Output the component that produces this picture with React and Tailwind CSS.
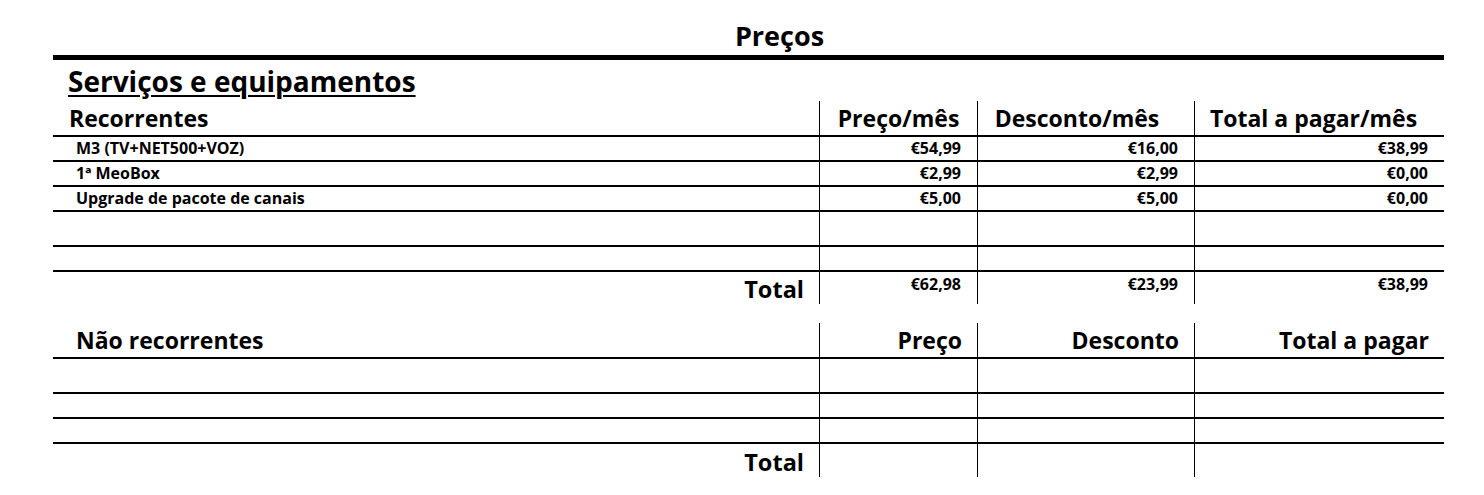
const recurring = [
  { label: 'M3 (TV+NET500+VOZ)', price: '€54,99', discount: '€16,00', total: '€38,99' },
  { label: '1ª MeoBox', price: '€2,99', discount: '€2,99', total: '€0,00' },
  { label: 'Upgrade de pacote de canais', price: '€5,00', discount: '€5,00', total: '€0,00' },
];

const grid = 'grid grid-cols-[766px_158px_217px_250px]';

function Row({ height, label, values = ['', '', ''] }) {
  return (
    <div className={`${grid} ${height} border-b-2 border-black`}>
      <div className="flex items-start pl-[23px] pt-[3px] text-[16px] leading-none">{label}</div>
      {values.map((v, i) => (
        <div key={i} className="flex items-start justify-end border-l border-black pr-[16px] pt-[3px] text-[16px] leading-none">
          {v}
        </div>
      ))}
    </div>
  );
}

function TotalRow({ height, values = ['', '', ''] }) {
  return (
    <div className={`${grid} ${height}`}>
      <div className="flex items-end justify-end pb-[3px] pr-[15px] text-[23.5px] leading-none">Total</div>
      {values.map((v, i) => (
        <div key={i} className="flex items-start justify-end border-l border-black pr-[16px] pt-[4px] text-[16px] leading-none">
          {v}
        </div>
      ))}
    </div>
  );
}

export default function App() {
  return (
    <div className="min-h-screen bg-white font-['Open_Sans',sans-serif] font-bold text-black">
      <div className="w-[1391px] ml-[53px]">
        <div className="flex h-[55px] items-end justify-center pb-[6px] pl-[62px] text-[27px] leading-none">
          Preços
        </div>
        <div className="h-[5px] bg-black" />
        <div className="flex h-[41px] items-end pl-[15px] pb-[6px]">
          <span className="text-[28px] leading-none underline decoration-2 underline-offset-[3px]">
            Serviços e equipamentos
          </span>
        </div>

        <div className={`${grid} h-[36px] border-b-2 border-black text-[23px] leading-none`}>
          <div className="flex items-end pl-[16px] pb-[5px]">Recorrentes</div>
          <div className="flex items-end justify-center border-l border-black pb-[5px]">Preço/mês</div>
          <div className="flex items-end justify-center border-l border-black pb-[5px] pr-[18px]">Desconto/mês</div>
          <div className="flex items-end justify-center border-l border-black pb-[5px] pr-[12px]">Total a pagar/mês</div>
        </div>
        {recurring.map((r) => (
          <Row key={r.label} height="h-[25px]" label={r.label} values={[r.price, r.discount, r.total]} />
        ))}
        <Row height="h-[35px]" />
        <Row height="h-[25px]" />
        <TotalRow height="h-[32px]" values={['€62,98', '€23,99', '€38,99']} />

        <div className="h-[19px]" />

        <div className={`${grid} h-[36px] border-b-2 border-black text-[23px] leading-none`}>
          <div className="flex items-end pl-[23px] pb-[5px]">Não recorrentes</div>
          <div className="flex items-end justify-end border-l border-black pb-[5px] pr-[15px]">Preço</div>
          <div className="flex items-end justify-end border-l border-black pb-[5px] pr-[15px]">Desconto</div>
          <div className="flex items-end justify-end border-l border-black pb-[5px] pr-[15px]">Total a pagar</div>
        </div>
        <Row height="h-[35px]" />
        <Row height="h-[25px]" />
        <Row height="h-[25px]" />
        <TotalRow height="h-[33px]" />
      </div>
    </div>
  );
}
